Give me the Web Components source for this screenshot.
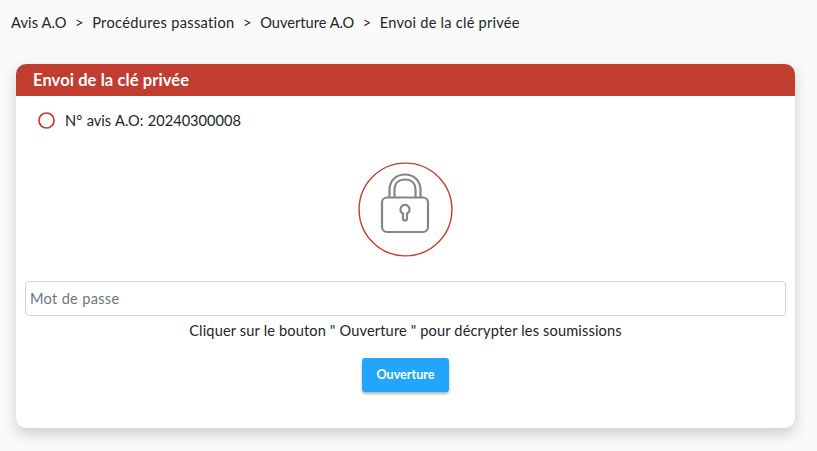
<!DOCTYPE html>
<html lang="fr"><head><meta charset="utf-8"><title>Envoi de la clé privée</title>
<style>
html,body{margin:0;height:451px;overflow:hidden;background:#fafafa;font-family:Lato,"Open Sans",sans-serif;color:#212529}
</style></head><body>
<app-page>
  <bread-crumbs slot="crumbs">
    <span style="letter-spacing:.12px">Avis A.O</span><span style="letter-spacing:.32px">Procédures passation</span><span>Ouverture A.O</span><span style="letter-spacing:.24px">Envoi de la clé privée</span>
  </bread-crumbs>
  <key-card title-text="Envoi de la clé privée">
    <notice-radio>N° avis A.O: 20240300008</notice-radio>
    <lock-badge></lock-badge>
    <password-field placeholder="Mot de passe"></password-field>
    <p-hint>Cliquer sur le bouton " Ouverture " pour décrypter les soumissions</p-hint>
    <action-button>Ouverture</action-button>
  </key-card>
</app-page>
<script>
function def(name,html,init){
  customElements.define(name,class extends HTMLElement{
    constructor(){super();this.attachShadow({mode:'open'}).innerHTML=html;}
    connectedCallback(){init&&init(this);}
  });
}
def('app-page',`<style>:host{display:flex;flex-direction:column;padding:14px 22px 0 16px;box-sizing:border-box;height:451px}</style><slot name="crumbs"></slot><slot></slot>`);
def('bread-crumbs',`<style>
:host{display:block;height:50px;margin-left:-5px;font-size:14.6px;line-height:18px;color:#212529}
::slotted(span){display:inline-block}
::slotted(span:not(:last-child))::after{content:">";margin:0 8.500px}
</style><slot></slot>`);
def('key-card',`<style>
:host{display:block;height:364px;background:#fff;border-radius:10px;box-shadow:0 6px 14px rgba(60,50,45,.22);overflow:hidden}
header{height:32px;box-sizing:border-box;padding:0 17px;background:#c03d30;color:#fff;font-weight:700;font-size:16.5px;letter-spacing:.1px;line-height:32px}
.b{display:flex;flex-direction:column;padding:0 9px}
</style><header></header><div class="b"><slot></slot></div>`,el=>{el.shadowRoot.querySelector('header').textContent=el.getAttribute('title-text')});
def('notice-radio',`<style>
:host{display:flex;align-items:center;gap:10px;height:48px;padding-left:13px;font-size:14.6px;color:#212529}
svg{display:block;flex:none}
span{word-spacing:.7px}
</style><svg width="17" height="17" viewBox="0 0 17 17"><circle cx="8.500" cy="8.500" r="7.500" fill="none" stroke="#c03d30" stroke-width="1.700"/></svg><span><slot></slot></span>`);
def('lock-badge',`<style>
:host{display:flex;justify-content:center;margin-top:18px;height:119px;padding-right:1px}
svg.c{display:block}
</style><svg class="c" width="95" height="95" viewBox="0 0 95 95" fill="none">
<circle cx="47.500" cy="47.500" r="46.400" stroke="#c03d30" stroke-width="1.400"/>
<g stroke="#858585" stroke-width="2.200" transform="translate(1 0)">
<rect x="23" y="35.500" width="46" height="34.500" rx="5"/>
<path d="M30.500 35.500V28C30.500 18.500 37 12.500 46 12.500S61.500 18.500 61.500 28V35.500"/>
<path d="M35.500 35.500V28C35.500 21.500 39.500 17.500 46 17.500S56.500 21.500 56.500 28V35.500"/>
<path d="M44 56.500V51.600A4.600 4.600 0 1 1 48 51.600V56.500A2 2 0 0 1 44 56.500Z"/>
</g></svg>`);
def('password-field',`<style>
:host{display:block}
input{display:block;width:100%;height:35px;box-sizing:border-box;border:1px solid #ced4da;border-radius:4px;padding:0 4px;font:14.6px Lato,"Open Sans",sans-serif;letter-spacing:.3px;background:#fff;outline:0}
input::placeholder{color:#6c757d;opacity:1}
</style><input type="password">`,el=>{el.shadowRoot.querySelector('input').placeholder=el.getAttribute('placeholder')});
def('p-hint',`<style>:host{display:block;text-align:center;font-size:14.6px;letter-spacing:.15px;line-height:18px;padding-top:6px;color:#212529}</style><slot></slot>`);
def('action-button',`<style>
:host{display:flex;justify-content:center;margin-top:18px}
button{width:87px;height:34px;border:0;border-radius:3px;background:#22a6fc;color:#fff;font:700 12.600px Lato,"Open Sans",sans-serif;box-shadow:0 2px 3px rgba(0,0,0,.3);padding:0 0 2px}
</style><button><slot></slot></button>`);
</script>
</body></html>
